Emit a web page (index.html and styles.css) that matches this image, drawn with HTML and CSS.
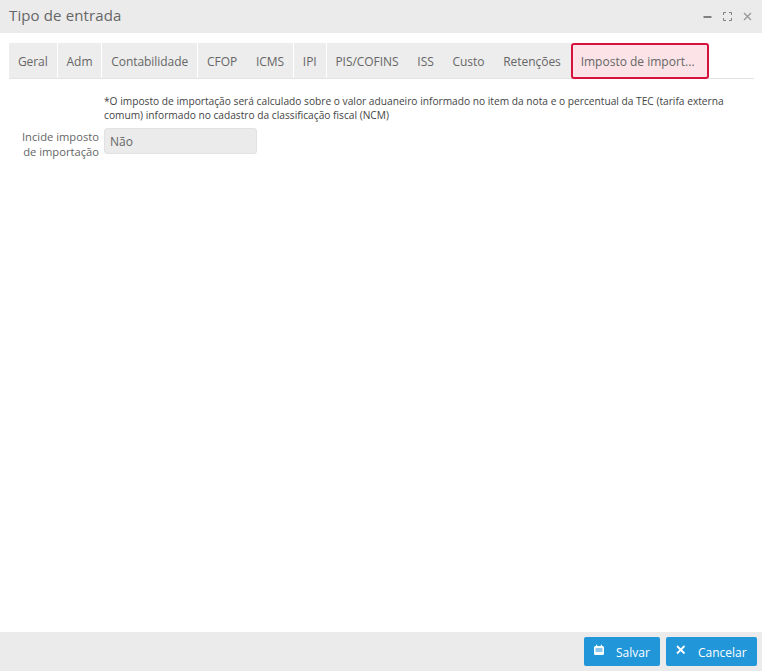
FILE: index.html
```
<!DOCTYPE html>
<html lang="pt">
<head>
<meta charset="utf-8">
<title>Tipo de entrada</title>
<link rel="stylesheet" href="styles.css">
</head>
<body>
<div class="window">
  <header class="titlebar">
    <h1 class="title">Tipo de entrada</h1>
    <div class="win-actions">
      <svg class="win-icon" width="10" height="10" viewBox="0 0 10 10"><rect x="0.5" y="4" width="8" height="2" fill="#808080"/></svg>
      <svg class="win-icon" width="10" height="10" viewBox="0 0 10 10"><path d="M.5 3V.5H3M6 .5h2.500V3M8.500 6v2.500H6M3 8.500H.5V6" fill="none" stroke="#808080"/></svg>
      <svg class="win-icon" width="10" height="10" viewBox="0 0 10 10"><path d="M1 1l7 7M8 1L1 8" fill="none" stroke="#999" stroke-width="1.400"/></svg>
    </div>
  </header>
  <main class="content">
    <nav class="tabs">
      <a class="tab">Geral</a>
      <a class="tab">Adm</a>
      <a class="tab">Contabilidade</a>
      <a class="tab tab-plain">CFOP</a>
      <a class="tab">ICMS</a>
      <a class="tab">IPI</a>
      <a class="tab tab-plain">PIS/COFINS</a>
      <a class="tab tab-plain">ISS</a>
      <a class="tab tab-plain">Custo</a>
      <a class="tab tab-plain">Retenções</a>
      <a class="tab tab-active">Imposto de import...</a>
    </nav>
    <div class="form">
      <p class="note">*O imposto de importação será calculado sobre o valor aduaneiro informado no item da nota e o percentual da TEC (tarifa externa comum) informado no cadastro da classificação fiscal (NCM)</p>
      <label class="field-label">Incide imposto de importação</label>
      <div class="select">Não</div>
    </div>
  </main>
  <footer class="footer">
    <button class="btn btn-save">
      <svg width="12" height="12" viewBox="0 0 12 12"><path d="M1 3.500Q1 2 2.500 2H3V.8h1.200V2h3.600V.8H9V2h.5Q11 2 11 3.500V9.500Q11 11 9.500 11h-7Q1 11 1 9.500z" fill="#fff"/><rect x="2.500" y="4" width="7" height="4" fill="#8cc8ee"/></svg>
      <span>Salvar</span>
    </button>
    <button class="btn btn-cancel">
      <svg width="12" height="12" viewBox="0 0 12 12"><path d="M2 2l7.500 7.500M9.500 2L2 9.500" fill="none" stroke="#fff" stroke-width="1.800"/></svg>
      <span>Cancelar</span>
    </button>
  </footer>
</div>
</body>
</html>
```

FILE: styles.css
```
* { box-sizing: border-box; }
html, body { margin: 0; height: 100%; }
body { font-family: "Open Sans", "Liberation Sans", sans-serif; color: #555; background: #fff; }
.window { width: 762px; height: 671px; display: flex; flex-direction: column; }
.titlebar { height: 33px; background: #ebebeb; display: flex; align-items: center; justify-content: space-between; padding: 0 9px; }
.title { margin: 0 0 3px; font-size: 15px; font-weight: 400; color: #666; letter-spacing: 0.13px; }
.win-actions { display: flex; gap: 10px; align-items: center; }
.content { flex: 1; padding: 10px 8px 0 9px; }
.tabs { display: flex; height: 36px; border-bottom: 1px solid #e3e3e3; }
.tab { height: 35px; display: flex; align-items: center; padding: 2px 8.92px 0; font-size: 12px; letter-spacing: -0.05px; color: #666; background: #ededed; border-right: 1px solid #fff; }
.tab-plain { border-right-color: #ededed; }
.tab-active { height: 36px; width: 138px; background: #fbe3e7; border: 2px solid #d6133c; border-radius: 3px; padding: 1px 8px 0; flex: none; white-space: nowrap; letter-spacing: 0; }
.form { display: grid; grid-template-columns: 91px 153px; column-gap: 4px; margin-top: 15px; }
.note { grid-row: 1; grid-column: 2; width: 645px; margin: 0 0 6px; font-size: 10.2px; line-height: 14px; color: #444; }
.field-label { grid-row: 2; grid-column: 1; text-align: right; font-size: 11.2px; line-height: 15px; color: #666; padding: 1px 1px 0 0; }
.select { grid-row: 2; grid-column: 2; height: 26px; background: #ebebeb; border: 1px solid #e2e2e2; border-radius: 3px; font-size: 12px; line-height: 26px; padding-left: 5px; color: #666; }
.footer { height: 39px; background: #ebebeb; display: flex; justify-content: flex-end; align-items: center; gap: 6px; padding: 0 5px 0 0; }
.btn { height: 29px; border: 0; border-radius: 2px; background: #2196d9; color: #fff; font-family: inherit; font-size: 12px; display: flex; align-items: center; padding: 2px 10px 0 9px; }
.btn svg { margin-bottom: 6px; margin-right: 11px; flex: none; }
.btn-save { width: 76px; }
.btn-cancel { width: 91px; }
```
